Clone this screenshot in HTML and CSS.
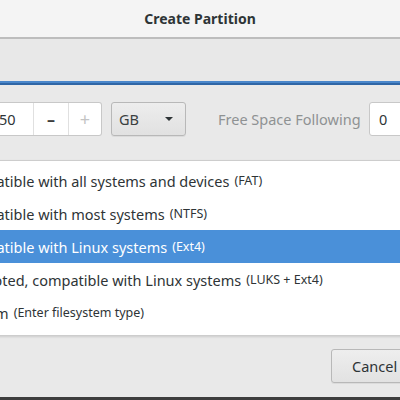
FILE: index.html
```html
<!DOCTYPE html>
<html>
<head>
<meta charset="utf-8">
<link rel="stylesheet" href="styles.css">
</head>
<body>
<div class="dialog">
  <div class="titlebar"><span class="title">Create Partition</span></div>
  <div class="band"></div>
  <div class="accent"></div>
  <div class="main">
    <div class="row">
      <div class="spin">
        <span class="spin-text">50</span>
        <span class="spin-btn minus">&#8211;</span>
        <span class="spin-btn plus">+</span>
      </div>
      <div class="combo">
        <span class="combo-text">GB</span>
        <span class="arrow"></span>
      </div>
      <span class="label">Free Space Following</span>
      <div class="entry"><span>0</span></div>
    </div>
  </div>
  <div class="footer">
    <div class="button">Cancel</div>
  </div>
  <div class="bottom-edge"></div>

  <div class="menu">
    <div class="item">Compatible with all systems and devices <small>(FAT)</small></div>
    <div class="item">Compatible with most systems <small>(NTFS)</small></div>
    <div class="item selected">Compatible with Linux systems <small>(Ext4)</small></div>
    <div class="item">Encrypted, compatible with Linux systems <small>(LUKS + Ext4)</small></div>
    <div class="item">Custom <small>(Enter filesystem type)</small></div>
  </div>
</div>
</body>
</html>
```

FILE: styles.css
```css
html, body {
  margin: 0;
  padding: 0;
}
body {
  width: 400px;
  height: 400px;
  overflow: hidden;
  font-family: "Noto Sans", "Open Sans", sans-serif;
  color: #2e3436;
}
.dialog {
  position: relative;
  width: 400px;
  height: 400px;
  overflow: hidden;
  display: flex;
  flex-direction: column;
  background: #e8e8e8;
}
.titlebar {
  height: 37px;
  flex: none;
  background: #f4f4f4;
  border-bottom: 2px solid #bdbdbd;
  display: flex;
  align-items: center;
  justify-content: center;
}
.title {
  font-weight: bold;
  font-size: 14px;
  color: #2e3436;
}
.band {
  height: 42px;
  flex: none;
  background: #e8e8e8;
}
.accent {
  height: 2px;
  flex: none;
  background: #2f66a6;
  border-top: 2px solid #4a87cb;
}
.main {
  flex: 1;
  background: #e9e9e9;
  padding-top: 17px;
}
.row {
  display: flex;
  align-items: center;
  height: 34px;
  white-space: nowrap;
}
.spin {
  flex: none;
  margin-left: -12px;
  height: 34px;
  box-sizing: border-box;
  background: #fff;
  border: 1px solid #c8c8c8;
  border-left: none;
  border-radius: 0 3px 3px 0;
  display: flex;
  align-items: stretch;
  font-size: 14.5px;
}
.spin-text {
  width: 45px;
  display: flex;
  align-items: center;
  padding-left: 11px;
  box-sizing: border-box;
}
.spin-btn {
  width: 35px;
  box-sizing: border-box;
  display: flex;
  align-items: center;
  justify-content: center;
  border-left: 1px solid #e0e0e0;
  font-size: 16px;
}
.minus {
  color: #3c3c3c;
  font-weight: bold;
}
.plus {
  width: 33px;
  color: #c4c4c4;
  font-size: 18px;
}
.combo {
  flex: none;
  margin-left: 9px;
  width: 75px;
  height: 34px;
  box-sizing: border-box;
  border: 1px solid #b8b8b8;
  border-radius: 3px;
  background: linear-gradient(#ededed, #e1e1e1);
  box-shadow: 0 1px 0 rgba(0,0,0,0.06);
  display: flex;
  align-items: center;
  padding-left: 7px;
  padding-right: 12px;
  font-size: 14.5px;
}
.combo-text {
  flex: 1;
  color: #3b3f40;
}
.arrow {
  width: 0;
  height: 0;
  border-left: 4px solid transparent;
  border-right: 4px solid transparent;
  border-top: 4px solid #2e3436;
}
.label {
  flex: none;
  width: 144px;
  margin-left: 32px;
  font-size: 14.5px;
  color: #8f9293;
}
.entry {
  margin-left: 7px;
  width: 60px;
  height: 34px;
  flex: none;
  box-sizing: border-box;
  border: 1px solid #c8c8c8;
  border-radius: 3px;
  background: #fff;
  display: flex;
  align-items: center;
  padding-left: 9px;
  font-size: 14.5px;
}
.footer {
  flex: none;
  background: #e9e9e9;
  display: flex;
  justify-content: flex-end;
  padding-bottom: 14px;
}
.button {
  width: 80px;
  height: 34px;
  box-sizing: border-box;
  margin-right: -11px;
  border: 1px solid #b8b8b8;
  border-radius: 3px;
  background: linear-gradient(#eeeeee, #e2e2e2);
  box-shadow: 0 1px 0 rgba(0,0,0,0.06);
  font-size: 14.5px;
  display: flex;
  align-items: center;
  padding-left: 20px;
  color: #2e3436;
}
.bottom-edge {
  height: 3px;
  flex: none;
  background: #3e3e3e;
}
.menu {
  position: absolute;
  top: 160px;
  left: -60px;
  right: -30px;
  background: #fff;
  border: 1px solid #cdcdcd;
  padding: 3px 0 6px;
  box-shadow: 0 1px 2px rgba(0,0,0,0.12);
}
.item {
  height: 33px;
  display: flex;
  align-items: center;
  padding-left: 15px;
  font-size: 14.5px;
  white-space: nowrap;
  color: #2e3436;
}
.item small {
  font-size: 12.5px;
  margin-left: 5px;
}
.item.selected {
  background: #4a90d9;
  color: #fff;
}
```
